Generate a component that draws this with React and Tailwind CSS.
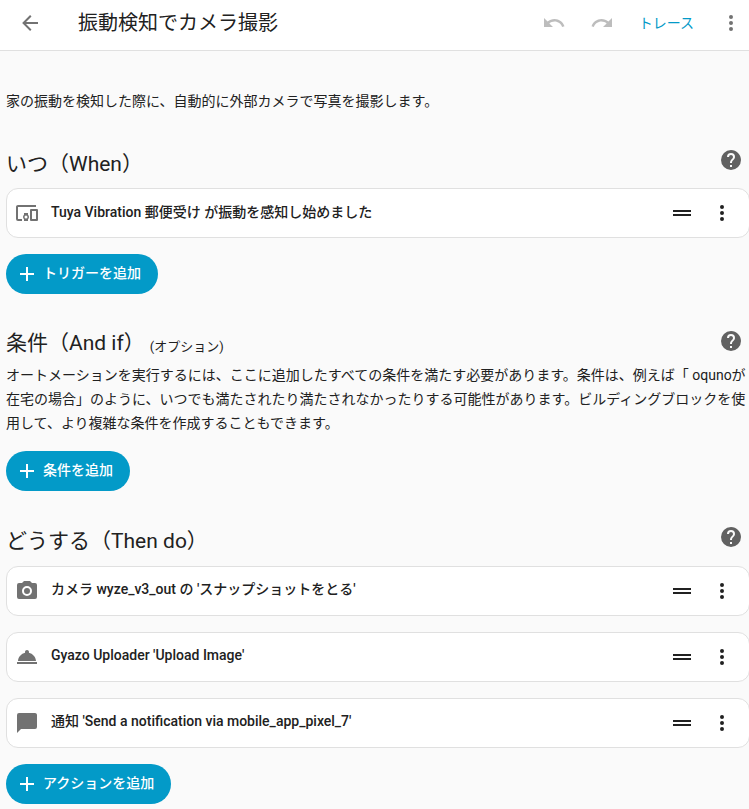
const paths = {
  back: "M20,11V13H8L13.5,18.5L12.08,19.92L4.16,12L12.08,4.08L13.5,5.5L8,11H20Z",
  undo: "M12.5,8C9.85,8 7.45,9 5.6,10.6L2,7V16H11L7.38,12.38C8.77,11.22 10.54,10.5 12.5,10.5C16.04,10.5 19.05,12.81 20.1,16L22.47,15.22C21.08,11.03 17.15,8 12.5,8Z",
  redo: "M18.4,10.6C16.55,9 14.15,8 11.5,8C6.85,8 2.92,11.03 1.54,15.22L3.9,16C4.95,12.81 7.95,10.5 11.5,10.5C13.45,10.5 15.23,11.22 16.62,12.38L13,16H22V7L18.4,10.6Z",
  dots: "M12,16A2,2 0 0,1 14,18A2,2 0 0,1 12,20A2,2 0 0,1 10,18A2,2 0 0,1 12,16M12,10A2,2 0 0,1 14,12A2,2 0 0,1 12,14A2,2 0 0,1 10,12A2,2 0 0,1 12,10M12,4A2,2 0 0,1 14,6A2,2 0 0,1 12,8A2,2 0 0,1 10,6A2,2 0 0,1 12,4Z",
  help: "M15.07,11.25L14.17,12.17C13.45,12.89 13,13.5 13,15H11V14.5C11,13.39 11.45,12.39 12.17,11.67L13.41,10.41C13.78,10.05 14,9.55 14,9C14,7.89 13.1,7 12,7A2,2 0 0,0 10,9H8A4,4 0 0,1 12,5A4,4 0 0,1 16,9C16,9.88 15.64,10.67 15.07,11.25M13,19H11V17H13M12,2A10,10 0 0,0 2,12A10,10 0 0,0 12,22A10,10 0 0,0 22,12C22,6.47 17.5,2 12,2Z",
  plus: "M19,13H13V19H11V13H5V11H11V5H13V11H19V13Z",
  drag: "M21,9H3V11H21V9M3,15H21V13H3V15Z",
  camera: "M4,4H7L9,2H15L17,4H20A2,2 0 0,1 22,6V18A2,2 0 0,1 20,20H4A2,2 0 0,1 2,18V6A2,2 0 0,1 4,4M12,7A5,5 0 0,0 7,12A5,5 0 0,0 12,17A5,5 0 0,0 17,12A5,5 0 0,0 12,7M12,9A3,3 0 0,1 15,12A3,3 0 0,1 12,15A3,3 0 0,1 9,12A3,3 0 0,1 12,9Z",
  service: "M2 17H22V19H2V17M13.84 7.79C13.94 7.57 14 7.29 14 7C14 5.9 13.1 5 12 5S10 5.9 10 7C10 7.29 10.06 7.57 10.16 7.79C6.25 8.6 3.27 11.93 3 16H21C20.73 11.93 17.75 8.6 13.84 7.79Z",
  message: "M20,2H4A2,2 0 0,0 2,4V22L6,18H20A2,2 0 0,0 22,16V4C22,2.89 21.1,2 20,2Z",
  devices: "M3,6H21V4H3C1.89,4 1,4.89 1,6V18A2,2 0 0,0 3,20H7V18H3V6M13,12H9V13.78C8.39,14.33 8,15.11 8,16C8,16.89 8.39,17.67 9,18.22V20H13V18.22C13.61,17.67 14,16.88 14,16C14,15.12 13.61,14.33 13,13.78V12M11,17.5A1.5,1.5 0 0,1 9.5,16A1.5,1.5 0 0,1 11,14.5A1.5,1.5 0 0,1 12.5,16A1.5,1.5 0 0,1 11,17.5M22,8H16A1,1 0 0,0 15,9V19A1,1 0 0,0 16,20H22A1,1 0 0,0 23,19V9A1,1 0 0,0 22,8M21,18H17V10H21V18Z",
};

const Icon = ({ d, className = "" }) => (
  <svg viewBox="0 0 24 24" className={`w-6 h-6 shrink-0 fill-current ${className}`}>
    <path d={d} />
  </svg>
);

const Row = ({ icon, text, lift = "pb-1" }) => (
  <div className="flex items-center h-[50px] w-[744px] pl-2 bg-white border border-[#e0e0e0] rounded-xl">
    <Icon d={icon} className="text-[#727272]" />
    <span className={`ml-3 ${lift} text-sm font-medium text-[#212121] whitespace-nowrap flex-1`}>{text}</span>
    <Icon d={paths.drag} className="text-[#212121]" />
    <Icon d={paths.dots} className="ml-4 mr-[15px] text-[#212121]" />
  </div>
);

const AddButton = ({ label, width }) => (
  <button className={`flex items-center h-10 ${width} pl-[9px] rounded-full bg-[#039ac8] text-white text-sm font-medium`}>
    <Icon d={paths.plus} />
    <span className="ml-1 pb-0.5 whitespace-nowrap">{label}</span>
  </button>
);

const Heading = ({ children, className = "" }) => (
  <div className={`flex items-center justify-between pr-[6px] ${className}`}>
    <h2 className="text-[21px] leading-8 text-[#212121] whitespace-nowrap">{children}</h2>
    <Icon d={paths.help} className="mb-2 text-[#616161]" />
  </div>
);

export default function App() {
  return (
    <div
      className="w-[749px] h-[809px] overflow-hidden bg-[#fafafa] text-[#212121]"
      style={{ fontFamily: "Roboto, 'Noto Sans CJK JP', sans-serif" }}
    >
      <header className="flex items-center h-[51px] pb-1 bg-white border-b border-[#e0e0e0]">
        <Icon d={paths.back} className="ml-[18px] text-[#727272]" />
        <h1 className="ml-[36px] flex-1 text-xl text-[#212121] whitespace-nowrap">振動検知でカメラ撮影</h1>
        <Icon d={paths.undo} className="text-[#bdbdbd]" />
        <Icon d={paths.redo} className="ml-6 text-[#bdbdbd]" />
        <span className="ml-[25px] text-sm text-[#039ac8]">トレース</span>
        <Icon d={paths.dots} className="ml-[25px] mr-[6px] text-[#727272]" />
      </header>

      <main className="pl-1.5">
        <p className="pt-10 text-sm leading-5 whitespace-nowrap">
          家の振動を検知した際に、自動的に外部カメラで写真を撮影します。
        </p>

        <Heading className="mt-[37px] h-8">いつ（When）</Heading>
        <div className="mt-2">
          <Row icon={paths.devices} lift="pb-0.5" text="Tuya Vibration 郵便受け が振動を感知し始めました" />
        </div>
        <div className="mt-4">
          <AddButton label="トリガーを追加" width="w-[152px]" />
        </div>

        <Heading className="mt-[35px] h-8">
          <span>条件（And if）</span>
          <span className="ml-[5px] text-[13px] align-[-1px] text-[#212121]">(オプション)</span>
        </Heading>
        <p className="mt-[2px] pr-[2px] text-sm leading-[24px]">
          オートメーションを実行するには、ここに追加したすべての条件を満たす必要があります。条件は、例えば「 oqunoが在宅の場合」のように、いつでも満たされたり満たされなかったりする可能性があります。ビルディングブロックを使用して、より複雑な条件を作成することもできます。
        </p>
        <div className="mt-4">
          <AddButton label="条件を追加" width="w-[124px]" />
        </div>

        <Heading className="mt-[34px] h-8">どうする（Then do）</Heading>
        <div className="mt-[9px] flex flex-col gap-4">
          <Row icon={paths.camera} text="カメラ wyze_v3_out の 'スナップショットをとる'" />
          <Row icon={paths.service} text="Gyazo Uploader 'Upload Image'" />
          <Row icon={paths.message} text="通知 'Send a notification via mobile_app_pixel_7'" />
        </div>
        <div className="mt-4">
          <AddButton label="アクションを追加" width="w-[165px]" />
        </div>
      </main>
    </div>
  );
}
